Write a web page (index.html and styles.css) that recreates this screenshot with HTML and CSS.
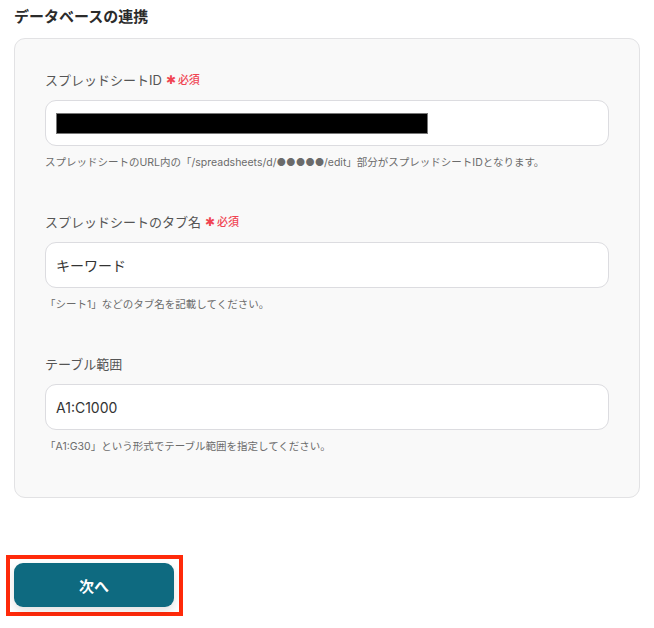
FILE: index.html
```html
<!DOCTYPE html>
<html lang="ja">
<head>
<meta charset="utf-8">
<link rel="stylesheet" href="styles.css">
</head>
<body>
<h2 class="title">データベースの連携</h2>
<div class="panel">
  <div class="field">
    <div class="label">スプレッドシートID <span class="req"><span class="ast">✱</span> 必須</span></div>
    <div class="input"><span class="mask"></span></div>
    <div class="help">スプレッドシートのURL内の「/spreadsheets/d/●●●●●/edit」部分がスプレッドシートIDとなります。</div>
  </div>
  <div class="field">
    <div class="label">スプレッドシートのタブ名 <span class="req"><span class="ast">✱</span> 必須</span></div>
    <div class="input">キーワード</div>
    <div class="help">「シート1」などのタブ名を記載してください。</div>
  </div>
  <div class="field">
    <div class="label">テーブル範囲</div>
    <div class="input">A1:C1000</div>
    <div class="help">「A1:G30」という形式でテーブル範囲を指定してください。</div>
  </div>
</div>
<div class="actions">
  <span class="highlight"><button class="next">次へ</button></span>
</div>
</body>
</html>
```

FILE: styles.css
```css
html, body {
  margin: 0;
  padding: 0;
  background: #ffffff;
  font-family: "Inter", "Noto Sans CJK JP", sans-serif;
  color: #333333;
}
.title {
  margin: 0;
  padding: 6px 14px 0;
  height: 32px;
  box-sizing: border-box;
  font-size: 15px;
  line-height: 22px;
  font-weight: 600;
  color: #2b2b2b;
}
.panel {
  margin: 6px 14px 0;
  box-sizing: border-box;
  height: 460px;
  border: 1px solid #e2e2e4;
  border-radius: 11px;
  background: #f9f9f9;
  padding: 31px 30px 0;
  display: flex;
  flex-direction: column;
  gap: 41px;
}
.field {
  display: flex;
  flex-direction: column;
}
.label {
  font-size: 13px;
  line-height: 20px;
  color: #555555;
  display: flex;
  align-items: center;
  gap: 4px;
}
.req {
  color: #f04452;
  font-size: 11px;
  font-weight: 500;
  display: inline-flex;
  align-items: center;
  gap: 2px;
}
.ast {
  font-size: 12px;
  line-height: 1;
}
.input {
  margin-top: 10px;
  height: 46px;
  box-sizing: border-box;
  background: #ffffff;
  border: 1px solid #dcdce0;
  border-radius: 11px;
  padding: 0 10px;
  display: flex;
  align-items: center;
  font-size: 14px;
  color: #333333;
}
.mask {
  display: block;
  width: 372px;
  height: 21px;
  background: #000000;
  border: 1px solid #777;
  box-sizing: border-box;
}
.help {
  margin-top: 9px;
  font-size: 10.5px;
  line-height: 16px;
  color: #6b6b6b;
  white-space: nowrap;
}
.actions {
  padding: 57px 0 0 6px;
}
.highlight {
  display: inline-block;
  border: 4px solid #ff2a0a;
  padding: 4px 5px 5px 4px;
}
.next {
  display: block;
  width: 160px;
  height: 44px;
  border: none;
  border-radius: 9px;
  background: #0e6a80;
  color: #ffffff;
  font-family: "Inter", "Noto Sans CJK JP", sans-serif;
  font-size: 15px;
  font-weight: 700;
  box-shadow: 0 4px 10px rgba(0, 0, 0, 0.12);
}
```
